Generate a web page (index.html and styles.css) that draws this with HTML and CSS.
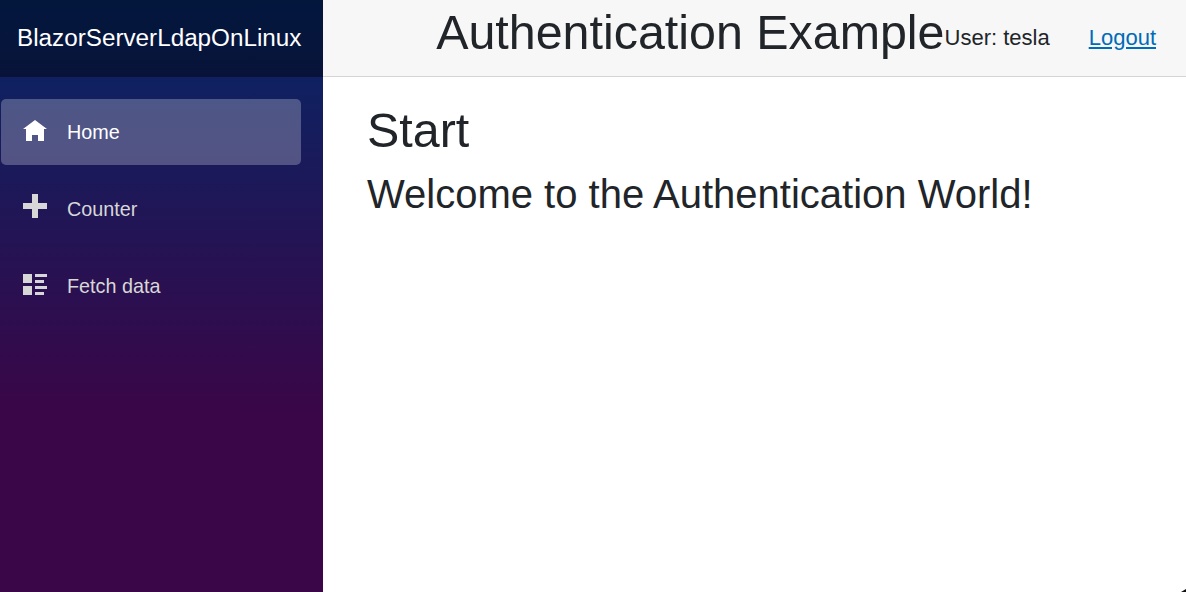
FILE: index.html
```html
<!DOCTYPE html>
<html lang="en">
<head>
<meta charset="utf-8">
<title>BlazorServerLdapOnLinux</title>
<link rel="stylesheet" href="styles.css">
</head>
<body>
<div class="page">
  <aside class="sidebar">
    <div class="brand-row"><a class="brand">BlazorServerLdapOnLinux</a></div>
    <nav class="menu">
      <a class="nav-link active">
        <svg class="icon" viewBox="0 0 8 8"><path d="M4 0l-4 3h1v4h2v-2h2v2h2v-4h1l-4-3z"/></svg>
        <span class="label">Home</span>
      </a>
      <a class="nav-link">
        <svg class="icon icon-plus" viewBox="0 0 8 8"><path d="M3 0v3h-3v2h3v3h2v-3h3v-2h-3v-3h-2z"/></svg>
        <span class="label">Counter</span>
      </a>
      <a class="nav-link">
        <svg class="icon" viewBox="0 0 8 8"><path d="M0 0v3h3v-3h-3zm4 0v1h4v-1h-4zm0 2v1h3v-1h-3zm-4 2v3h3v-3h-3zm4 0v1h4v-1h-4zm0 2v1h3v-1h-3z"/></svg>
        <span class="label">Fetch data</span>
      </a>
    </nav>
  </aside>
  <main class="main">
    <header class="top-row">
      <h1 class="title">Authentication Example</h1>
      <span class="user">User: tesla</span>
      <a class="logout" href="#">Logout</a>
    </header>
    <article class="content">
      <h1 class="heading">Start</h1>
      <h2 class="subheading">Welcome to the Authentication World!</h2>
    </article>
  </main>
  <div class="corner"></div>
</div>
</body>
</html>
```
FILE: styles.css
```css
* { box-sizing: border-box; }

body {
  margin: 0;
  font: 22px/1.5 "Liberation Sans", Arial, sans-serif;
  color: #212529;
  background: #fff;
}

.page {
  position: relative;
  display: flex;
  height: 592px;
  overflow: hidden;
}

.sidebar {
  flex: 0 0 323px;
  background: linear-gradient(180deg, rgb(5, 39, 103) 0%, #3a0647 70%);
}

.brand-row {
  display: flex;
  align-items: center;
  height: 77px;
  padding-left: 17px;
  background: rgba(0, 0, 0, 0.4);
}

.brand {
  font-size: 24.25px;
  color: #fff;
  white-space: nowrap;
}

.menu {
  display: flex;
  flex-direction: column;
  gap: 11px;
  padding: 22px 22px 0 1px;
}

.nav-link {
  display: flex;
  align-items: center;
  gap: 20px;
  height: 66px;
  padding-left: 22px;
  border-radius: 5px;
  font-size: 19.8px;
  color: #d7d7d7;
}

.nav-link.active {
  background: rgba(255, 255, 255, 0.25);
  color: #fff;
}

.label { padding-top: 2px; }

.icon {
  width: 24px;
  height: 24px;
  fill: currentColor;
}

.icon-plus { margin-bottom: 6px; }

.main { flex: 1; }

.top-row {
  display: flex;
  justify-content: flex-end;
  align-items: center;
  height: 77px;
  padding-right: 30px;
  border-bottom: 1px solid #d6d5d5;
  background: #f7f7f7;
}

.title,
.heading,
.subheading {
  margin: 0 0 11px;
  font-weight: 500;
  line-height: 1.2;
  white-space: nowrap;
}

.title,
.heading { font-size: 48.4px; }

.subheading { font-size: 40px; }

.user,
.logout { padding-bottom: 2px; }

.logout {
  margin-left: 39px;
  color: #006bb7;
}

.content { padding: 24px 44px 0; }

.corner {
  position: absolute;
  right: 0;
  bottom: 0;
  width: 5px;
  height: 3px;
  background: #111;
  clip-path: polygon(100% 0, 100% 100%, 0 100%);
}
```
